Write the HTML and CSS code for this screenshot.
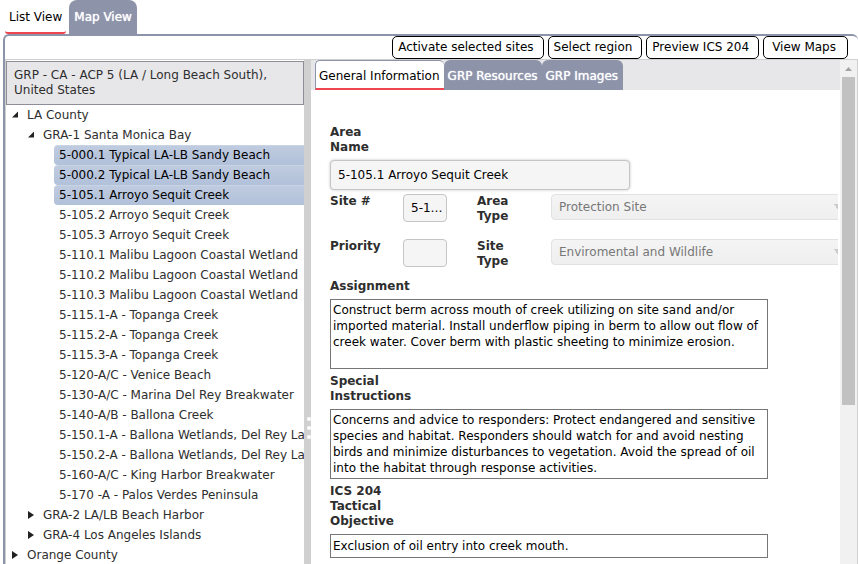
FILE: index.html
```html
<!DOCTYPE html>
<html lang="en">
<head>
<meta charset="utf-8">
<title>Response Plan Sites</title>
<link rel="stylesheet" href="styles.css">
</head>
<body>
<div class="app">
  <nav class="view-tabs">
    <button type="button" class="view-tab current">List View</button>
    <button type="button" class="view-tab">Map View</button>
  </nav>
  <main class="panel">
    <div class="toolbar">
      <button type="button">Activate selected sites</button>
      <button type="button">Select region</button>
      <button type="button">Preview ICS 204</button>
      <button type="button" class="maps">View Maps</button>
    </div>
    <div class="split">
      <aside class="sidebar">
        <h1 class="plan">GRP - CA - ACP 5 (LA / Long Beach South), United States</h1>
        <ul class="tree">
          <li>
            <button type="button" class="node"><svg viewBox="0 0 7 7"><path d="M6 0v6H0z"/></svg>LA County</button>
            <ul>
              <li>
                <button type="button" class="node"><svg viewBox="0 0 7 7"><path d="M6 0v6H0z"/></svg>GRA-1 Santa Monica Bay</button>
                <ul class="sites">
                  <li><button type="button" class="selected">5-000.1 Typical LA-LB Sandy Beach</button></li>
                  <li><button type="button" class="selected">5-000.2 Typical LA-LB Sandy Beach</button></li>
                  <li><button type="button" class="selected">5-105.1 Arroyo Sequit Creek</button></li>
                  <li><button type="button">5-105.2 Arroyo Sequit Creek</button></li>
                  <li><button type="button">5-105.3 Arroyo Sequit Creek</button></li>
                  <li><button type="button">5-110.1 Malibu Lagoon Coastal Wetland</button></li>
                  <li><button type="button">5-110.2 Malibu Lagoon Coastal Wetland</button></li>
                  <li><button type="button">5-110.3 Malibu Lagoon Coastal Wetland</button></li>
                  <li><button type="button">5-115.1-A - Topanga Creek</button></li>
                  <li><button type="button">5-115.2-A - Topanga Creek</button></li>
                  <li><button type="button">5-115.3-A - Topanga Creek</button></li>
                  <li><button type="button">5-120-A/C - Venice Beach</button></li>
                  <li><button type="button">5-130-A/C - Marina Del Rey Breakwater</button></li>
                  <li><button type="button">5-140-A/B - Ballona Creek</button></li>
                  <li><button type="button">5-150.1-A - Ballona Wetlands, Del Rey La</button></li>
                  <li><button type="button">5-150.2-A - Ballona Wetlands, Del Rey La</button></li>
                  <li><button type="button">5-160-A/C - King Harbor Breakwater</button></li>
                  <li><button type="button">5-170 -A - Palos Verdes Peninsula</button></li>
                </ul>
              </li>
              <li><button type="button" class="node"><svg viewBox="0 0 7 8"><path d="M0 0l6 4-6 4z"/></svg>GRA-2 LA/LB Beach Harbor</button></li>
              <li><button type="button" class="node"><svg viewBox="0 0 7 8"><path d="M0 0l6 4-6 4z"/></svg>GRA-4 Los Angeles Islands</button></li>
            </ul>
          </li>
          <li><button type="button" class="node"><svg viewBox="0 0 7 8"><path d="M0 0l6 4-6 4z"/></svg>Orange County</button></li>
        </ul>
      </aside>
      <div class="splitter"><i></i><i></i><i></i></div>
      <section class="detail">
        <nav class="detail-tabs">
          <button type="button" class="detail-tab current">General Information</button>
          <button type="button" class="detail-tab">GRP Resources</button>
          <button type="button" class="detail-tab">GRP Images</button>
        </nav>
        <form class="fields">
          <label class="caption" for="area-name">Area Name</label>
          <input class="text name" id="area-name" value="5-105.1 Arroyo Sequit Creek">
          <div class="pairs">
            <label for="site-no">Site #</label>
            <input class="text" id="site-no" value="5-105.1">
            <label class="type" for="area-type">Area Type</label>
            <select id="area-type" disabled><option>Protection Site</option></select>
            <label for="priority">Priority</label>
            <input class="text" id="priority">
            <label class="type" for="site-type">Site Type</label>
            <select id="site-type" disabled><option>Enviromental and Wildlife</option></select>
          </div>
          <label class="caption" for="assignment">Assignment</label>
          <textarea id="assignment" rows="4">Construct berm across mouth of creek utilizing on site sand and/or imported material. Install underflow piping in berm to allow out flow of creek water. Cover berm with plastic sheeting to minimize erosion.</textarea>
          <label class="caption" for="special">Special Instructions</label>
          <textarea id="special" rows="4">Concerns and advice to responders: Protect endangered and sensitive species and habitat. Responders should watch for and avoid nesting birds and minimize disturbances to vegetation. Avoid the spread of oil into the habitat through response activities.</textarea>
          <label class="caption" for="objective">ICS 204 Tactical Objective</label>
          <textarea id="objective" class="single" rows="1">Exclusion of oil entry into creek mouth.</textarea>
        </form>
      </section>
      <div class="scrollbar">
        <svg viewBox="0 0 7 4"><path d="M0 4L3.500 0 7 4z"/></svg>
        <div class="thumb"></div>
      </div>
    </div>
  </main>
</div>
</body>
</html>
```
FILE: styles.css
```css
* {
  box-sizing: border-box;
}

body {
  margin: 0;
  background: #fff;
  color: #2e2e2e;
  font: 12px/15px "DejaVu Sans", Verdana, sans-serif;
}

button,
input,
select,
textarea {
  margin: 0;
  border: 0;
  border-radius: 0;
  background: none;
  color: inherit;
  font: inherit;
}

ul {
  margin: 0;
  padding: 0;
  list-style: none;
}

.app {
  display: flex;
  flex-direction: column;
  height: 100vh;
  overflow: hidden;
}

.view-tabs {
  display: flex;
  gap: 3px;
  height: 34px;
  padding-left: 5px;
}

.view-tab {
  padding: 0 5px;
  border-radius: 8px 8px 0 0;
  background: #8d94aa;
  color: #fff;
  text-shadow: 0 0 1px #fff;
}

.view-tab.current {
  padding: 2px 4px 0;
  border-bottom: 2px solid #ef4550;
  border-radius: 3px;
  background: #fff;
  color: #000;
  text-shadow: none;
}

.panel {
  display: flex;
  flex: 1;
  flex-direction: column;
  min-height: 0;
  margin-left: 3px;
  border: solid #8d94aa;
  border-width: 2px 0 0 2px;
  border-radius: 6px 6px 0 0;
}

.toolbar {
  display: flex;
  justify-content: flex-end;
  gap: 4px;
  height: 23px;
  padding-right: 10px;
}

.toolbar button {
  padding: 0 9px 0 5px;
  border: 1px solid #000;
  border-radius: 5px;
  background: #fff;
  color: #000;
}

.toolbar .maps {
  padding: 0 11px 0 8px;
}

.split {
  display: flex;
  flex: 1;
  min-height: 0;
  border: solid #d0d0d0;
  border-width: 1px 1px 0;
}

.sidebar {
  flex: 0 0 298px;
  padding-top: 1px;
  overflow: hidden;
}

.plan {
  margin: 0;
  padding: 6px 7px;
  border: 1px solid #8e8e98;
  background: #e7e7ea;
  font: inherit;
}

.tree button {
  display: block;
  width: 100%;
  height: 20px;
  padding: 0;
  text-align: left;
  white-space: nowrap;
}

.tree .node {
  display: flex;
  align-items: center;
  gap: 8px;
  padding-left: 6px;
}

.tree ul {
  padding-left: 16px;
}

.tree svg {
  width: 7px;
  height: 8px;
  fill: #222;
}

.tree .sites {
  padding-left: 32px;
}

.sites button {
  padding-left: 5px;
}

.sites .selected {
  border-top: 1px solid #c8d3e4;
  border-radius: 4px 0 0 4px;
  background: linear-gradient(#bfcbdf, #b1c1da);
  color: #000;
}

.splitter {
  display: flex;
  flex: 0 0 7px;
  flex-direction: column;
  align-items: flex-end;
  justify-content: center;
  gap: 5px;
  padding-top: 232px;
  background: #d0d0d0;
}

.splitter i {
  width: 4px;
  height: 4px;
  border-radius: 2px;
  background: #fff;
}

.detail {
  flex: 1;
  min-width: 0;
  overflow: hidden;
}

.detail-tabs {
  display: flex;
  height: 30px;
  padding-left: 4px;
  background: #e7e7ea;
}

.detail-tab {
  padding: 2px 4px 0;
  border-radius: 6px 6px 0 0;
  background: #8d94aa;
  color: #fff;
  text-shadow: 0 0 1px #fff;
}

.detail-tab.current {
  padding: 4px 4px 0 3px;
  border: solid #8d94aa;
  border-width: 1px 0 2px 1px;
  border-bottom-color: #ef4550;
  border-radius: 5px 5px 0 0;
  background: #fff;
  color: #000;
  text-shadow: none;
}

.detail-tab:last-child {
  padding-right: 5px;
}

.fields {
  padding: 35px 2px 0 19px;
}

.fields label {
  font-weight: bold;
}

.caption {
  display: block;
  width: 72px;
}

.text {
  display: block;
  width: 44px;
  height: 28px;
  padding: 0 3px 0 7px;
  border: 1px solid #c5c5c5;
  border-radius: 4px;
  background: #f5f5f5;
  color: #000;
  text-overflow: ellipsis;
}

.name {
  width: 300px;
  height: 30px;
  margin: 5px 0 4px;
  box-shadow: 0 0 3px #c5c5c5;
}

.pairs {
  display: grid;
  grid-template-columns: 73px 44px 104px 1fr;
  grid-template-rows: 45px 40px;
  align-items: start;
  overflow: hidden;
}

.pairs .type {
  width: 70px;
  padding-left: 30px;
}

.pairs select {
  width: calc(100% + 8px);
  height: 26px;
  padding: 0 7px;
  border: 1px solid #e2e2e2;
  border-radius: 4px;
  appearance: none;
  background:
    linear-gradient(to top right, transparent 50%, #ccc 50%) right 7px top 9px / 4px 6px no-repeat,
    linear-gradient(#f4f4f4, #efefef);
  color: #777;
  opacity: 1;
}

.fields textarea {
  display: block;
  width: 438px;
  max-width: 100%;
  margin: 5px 0;
  padding: 2px;
  border: 1px solid #767676;
  background: #fff;
  color: #000;
  line-height: 16px;
  overflow: hidden;
  resize: none;
}

.fields .single {
  padding: 3px 2px;
}

.scrollbar {
  display: flex;
  flex: 0 0 17px;
  flex-direction: column;
  align-items: center;
  gap: 6px;
  padding-top: 7px;
  background: #f1f1f1;
}

.scrollbar svg {
  flex: none;
  width: 7px;
  height: 4px;
  fill: #a3a3a3;
}

.thumb {
  width: 13px;
  height: 66%;
  background: #c1c1c1;
}
```
